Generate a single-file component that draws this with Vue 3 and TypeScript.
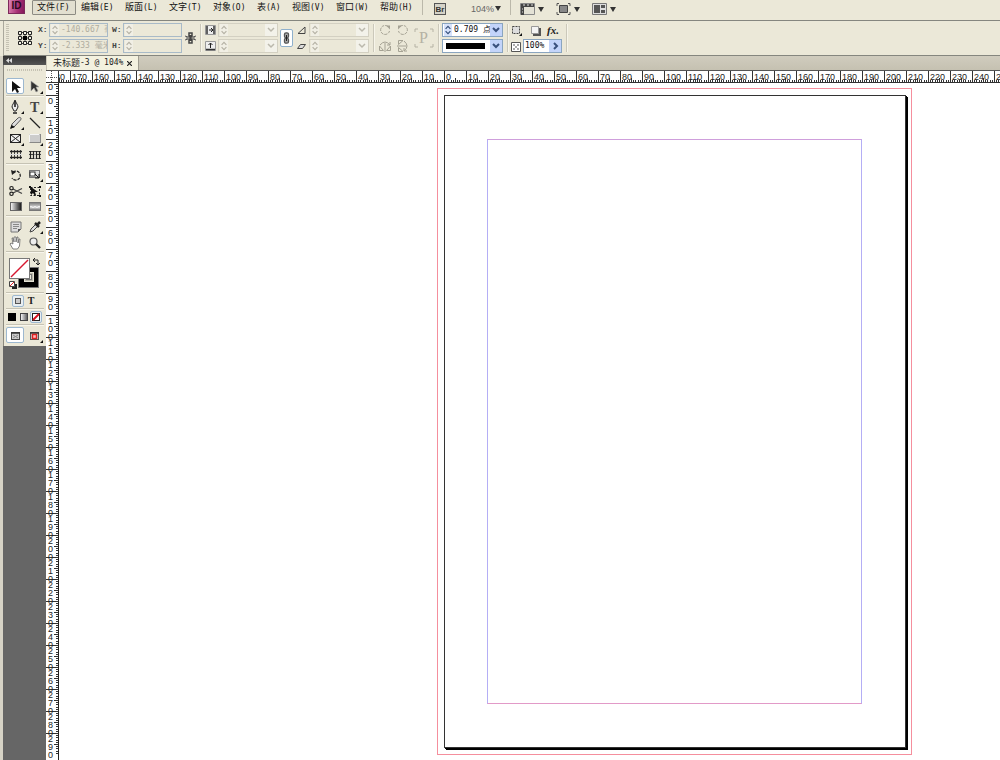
<script setup lang="ts">
import { ref } from 'vue'

interface MenuItem { label: string; key: string; short?: boolean }
interface Tick { pos: number; len: number }

const menus: MenuItem[] = [
  { label: '文件', key: '(F)' },
  { label: '编辑', key: '(E)' },
  { label: '版面', key: '(L)' },
  { label: '文字', key: '(T)' },
  { label: '对象', key: '(O)' },
  { label: '表', key: '(A)', short: true },
  { label: '视图', key: '(V)' },
  { label: '窗口', key: '(W)' },
  { label: '帮助', key: '(H)' },
]

const posX = ref('-140.667 毫米')
const posY = ref('-2.333 毫米')
const sizeW = ref('')
const sizeH = ref('')
const strokeWeight = ref('0.709 点')
const opacity = ref('100%')
const activeTool = ref('select')

const range = (from: number, to: number): number[] =>
  Array.from({ length: to - from + 1 }, (_, i) => Math.abs(from + i) * 10)
const hMarks = range(-18, 25)
const vMarks = range(-1, 29)
const ticks: Tick[] = Array.from({ length: 9 }, (_, i) => ({
  pos: Math.round((i + 1) * 2.2),
  len: i === 4 ? 4 : 2,
}))

const icons: Record<string, string> = {
  select: '<path d="M5 2v11l3-3 2 4 2-1-2-4h4z" fill="#111"/>',
  direct: '<path d="M5 2v10l3-3 2 4 2-1-2-4h3z" fill="#333" stroke="#aaa" stroke-width=".6"/><path d="M17 12v3h-3z" fill="#111"/>',
  pen: '<path d="M8 1c-1 3-3 5-3 7l2 4h2l2-4c0-2-2-4-3-7z" fill="#eee" stroke="#222"/><path d="M8 2v6M6 14h4" stroke="#222" stroke-width="1.6"/><path d="M17 12v3h-3z" fill="#111"/>',
  type: '<text x="4" y="13" font-family="Liberation Serif, serif" font-size="14" font-weight="bold" fill="#444">T</text><path d="M17 12v3h-3z" fill="#111"/>',
  pencil: '<path d="M4 13l1-4 6-6c2-1.500 4 0 2.500 2L7 12z" fill="#ddd" stroke="#555"/><path d="M3 14l1.500-4L8 12z" fill="#111"/><path d="M17 12v3h-3z" fill="#111"/>',
  line: '<path d="M4 3l10 10" stroke="#222" stroke-width="1.3"/>',
  frame: '<rect x="3.500" y="3.500" width="10" height="8" fill="#eee" stroke="#222"/><path d="M4 4l9 7M13 4l-9 7" stroke="#222"/><path d="M17 12v3h-3z" fill="#111"/>',
  rect: '<rect x="3.500" y="3.500" width="11" height="8" fill="#ccc" stroke="#888"/><path d="M3.500 11.500v-8h10" stroke="#f5f5f5" fill="none"/><path d="M17 12v3h-3z" fill="#111"/>',
  hgrid: '<path d="M4.500 3v9M7.500 3v9M10.500 3v9M13.500 3v9" stroke="#444"/><path d="M3 4.500h12M3 10.500h12" stroke="#222" stroke-width="1.3"/><path d="M3 7.500h12" stroke="#ddd"/>',
  vgrid: '<path d="M3 4.500h12M3 7.500h12M3 11.500h12" stroke="#444"/><path d="M4.500 4v8M7.500 4v8M10.500 4v8M13.500 4v8" stroke="#222" stroke-width="1.2"/><path d="M9 5v7" stroke="#ddd"/>',
  rotate: '<path d="M6 5a4.500 4.500 0 1 1-1 6" fill="none" stroke="#222" stroke-width="1.3" stroke-dasharray="3 1"/><path d="M4 3l1 5 4-3z" fill="#222"/>',
  scale: '<rect x="3.500" y="3.500" width="10" height="7" fill="#ddd" stroke="#777"/><rect x="4" y="5" width="5" height="4" fill="#fff" stroke="#333"/><path d="M9 7l4 4M13 7v4H9" stroke="#111" fill="none"/><path d="M17 12v3h-3z" fill="#111"/>',
  scissors: '<path d="M6 6l9 4.500M6 10l9-4.500" stroke="#444" stroke-width="1.3"/><circle cx="4.500" cy="5.200" r="1.700" fill="none" stroke="#222" stroke-width="1.2"/><circle cx="4.500" cy="10.800" r="1.700" fill="none" stroke="#222" stroke-width="1.2"/>',
  transform: '<rect x="4.500" y="4.500" width="9" height="8" fill="none" stroke="#222" stroke-dasharray="2 1.500"/><path d="M3 3h2v2H3zM13 3h2v2h-2zM13 12h2v2h-2z" fill="#111"/><path d="M5 4v8l2-2 2 3 1-1-1-3h3z" fill="#111"/>',
  gradient: '<defs><linearGradient id="g1"><stop stop-color="#fff"/><stop offset="1" stop-color="#111"/></linearGradient></defs><rect x="3.500" y="3.500" width="11" height="8" fill="url(#g1)" stroke="#666"/>',
  feather: '<defs><linearGradient id="g2" x2="0" y2="1"><stop stop-color="#777"/><stop offset=".6" stop-color="#ddd"/><stop offset="1" stop-color="#666"/></linearGradient></defs><rect x="3.500" y="3.500" width="11" height="8" fill="url(#g2)" stroke="#777"/><path d="M4 7.500h2v1h2v-1h2v1h2v-1h2" stroke="#eee" fill="none"/>',
  note: '<path d="M4 3h10v7l-3 3H4z" fill="#ddd" stroke="#777"/><path d="M6 5.500h6M6 7.500h6M6 9.500h4" stroke="#888"/><path d="M14 10h-3v3z" fill="#555"/>',
  dropper: '<path d="M4 13l1-3 5-5 2 2-5 5z" fill="#ddd" stroke="#444"/><path d="M9 4l4 4M11 6l3-3" stroke="#222" stroke-width="2.500"/><path d="M17 12v3h-3z" fill="#111"/>',
  hand: '<path d="M6 14L3 9l1-1 2 1-1-6h1l1 4V2h2v5l1-5h1v6l1-4h1l-.5 7-2 3z" fill="#fff" stroke="#666" stroke-width=".8"/>',
  magnify: '<circle cx="7.500" cy="6.500" r="3.500" fill="#eee" stroke="#555" stroke-width="1.200"/><path d="M10 9l4 4" stroke="#222" stroke-width="2.300"/>',
}

const toolGroups: { id: string; label: string }[][] = [
  [{ id: 'select', label: '选择工具' }, { id: 'direct', label: '直接选择工具' }],
  [
    { id: 'pen', label: '钢笔工具' }, { id: 'type', label: '文字工具' },
    { id: 'pencil', label: '铅笔工具' }, { id: 'line', label: '直线工具' },
    { id: 'frame', label: '矩形框架工具' }, { id: 'rect', label: '矩形工具' },
    { id: 'hgrid', label: '水平网格工具' }, { id: 'vgrid', label: '垂直网格工具' },
  ],
  [
    { id: 'rotate', label: '旋转工具' }, { id: 'scale', label: '缩放工具' },
    { id: 'scissors', label: '剪刀工具' }, { id: 'transform', label: '自由变换工具' },
    { id: 'gradient', label: '渐变色板工具' }, { id: 'feather', label: '渐变羽化工具' },
  ],
  [
    { id: 'note', label: '附注工具' }, { id: 'dropper', label: '吸管工具' },
    { id: 'hand', label: '抓手工具' }, { id: 'magnify', label: '缩放显示工具' },
  ],
]
</script>

<template>
  <div class="app">
    <header class="menubar">
      <div class="logo">ID</div>
      <nav class="menus">
        <button v-for="(m, i) in menus" :key="m.label" class="menu" :class="{ short: m.short, open: i === 0 }" type="button">
          {{ m.label }}<span class="mono">{{ m.key }}</span>
        </button>
      </nav>
      <i class="msep"></i>
      <button class="bridge" type="button">Br</button>
      <select class="zoom" aria-label="缩放级别"><option>104%</option></select>
      <svg class="tri" viewBox="0 0 6 5"><path d="M0 0h6L3 5z" /></svg>
      <i class="msep second"></i>
      <button class="view" type="button" aria-label="视图选项">
        <svg width="15" height="12" viewBox="0 0 15 12"><path d="M.5 .5h14v11H.5z" fill="#e4e2d6" stroke="#888" /><path d="M1 1h13v3H4v8H1z" fill="#444" /><path d="M3 2h2M7 2h2M11 2h2M2 6h1M2 9h1" stroke="#ddd" /></svg>
        <svg class="tri" viewBox="0 0 6 5"><path d="M0 0h6L3 5z" /></svg>
      </button>
      <button class="view" type="button" aria-label="屏幕模式">
        <svg width="15" height="12" viewBox="0 0 15 12"><path d="M3.500 2.500h8v7h-8z" fill="#888" stroke="#444" /><path d="M1 3V.5h2M12 .5h2V3M14 9v2.500h-2M3 11.500H1V9" fill="none" stroke="#555" /></svg>
        <svg class="tri" viewBox="0 0 6 5"><path d="M0 0h6L3 5z" /></svg>
      </button>
      <button class="view" type="button" aria-label="排列文档">
        <svg width="15" height="12" viewBox="0 0 15 12"><path d="M.5 .5h14v11H.5z" fill="#ddd" stroke="#777" /><path d="M2 2h6v8H2zM9 2h4v3H9zM9 7h4v3H9z" fill="#555" /></svg>
        <svg class="tri" viewBox="0 0 6 5"><path d="M0 0h6L3 5z" /></svg>
      </button>
    </header>

    <section class="control">
      <i class="grip"></i>
      <svg class="refpoint" width="16" height="16" viewBox="0 0 16 16">
        <path d="M3 2.500h10v11H3zM8 2v12M3 8h10" fill="none" stroke="#444" />
        <g fill="#f2f0e4" stroke="#222"><path d="M1.500 1.500h3v3h-3zM6.500 1.500h3v3h-3zM11.500 1.500h3v3h-3zM1.500 6.500h3v3h-3zM11.500 6.500h3v3h-3zM1.500 11.500h3v3h-3zM6.500 11.500h3v3h-3zM11.500 11.500h3v3h-3z" /></g>
        <path d="M6 6h4v4H6z" fill="#000" />
      </svg>
      <div class="pair first">
        <label for="px">X:</label>
        <div class="field"><svg class="spin" viewBox="0 0 6 10"><path d="M1 4l2-2 2 2M1 6l2 2 2-2" /></svg><input id="px" v-model="posX"></div>
        <label for="py">Y:</label>
        <div class="field"><svg class="spin" viewBox="0 0 6 10"><path d="M1 4l2-2 2 2M1 6l2 2 2-2" /></svg><input id="py" v-model="posY"></div>
      </div>
      <div class="pair second">
        <label for="sw">W:</label>
        <div class="field"><svg class="spin" viewBox="0 0 6 10"><path d="M1 4l2-2 2 2M1 6l2 2 2-2" /></svg><input id="sw" v-model="sizeW"></div>
        <label for="sh">H:</label>
        <div class="field"><svg class="spin" viewBox="0 0 6 10"><path d="M1 4l2-2 2 2M1 6l2 2 2-2" /></svg><input id="sh" v-model="sizeH"></div>
      </div>
      <button class="chain" type="button" aria-label="约束宽高比例">
        <svg width="11" height="12" viewBox="0 0 11 12"><path d="M4 1h3v4H4zM4 7h3v4H4zM5.500 3v6" fill="none" stroke="#444" stroke-width="1.500" /><path d="M0 4l3 1M0 8l3-1M11 4L8 5M11 8L8 7M1 6h2M8 6h2" stroke="#555" /></svg>
      </button>
      <i class="csep"></i>
      <div class="pair icons third">
        <svg width="11" height="10" viewBox="0 0 11 10"><path d="M.5 .5h10v9H.5z" fill="#eee" stroke="#999" /><path d="M2 1v8M9 1v8" stroke="#333" stroke-width="1.500" /><path d="M4 5h4M6 3l2 2-2 2" fill="none" stroke="#222" /></svg>
        <div class="field off"><svg class="spin" viewBox="0 0 6 10"><path d="M1 4l2-2 2 2M1 6l2 2 2-2" /></svg><input aria-label="X 缩放百分比" disabled><button class="drop" type="button" disabled aria-label="X 缩放选项"><svg viewBox="0 0 10 10"><path d="M2 3l3 3 3-3" /></svg></button></div>
        <svg width="11" height="10" viewBox="0 0 11 10"><path d="M.5 .5h10v9H.5z" fill="#eee" stroke="#999" /><path d="M1 8.500h9" stroke="#333" stroke-width="1.500" /><path d="M5.500 7V2M3.500 4l2-2 2 2" fill="none" stroke="#222" /></svg>
        <div class="field off"><svg class="spin" viewBox="0 0 6 10"><path d="M1 4l2-2 2 2M1 6l2 2 2-2" /></svg><input aria-label="Y 缩放百分比" disabled><button class="drop" type="button" disabled aria-label="Y 缩放选项"><svg viewBox="0 0 10 10"><path d="M2 3l3 3 3-3" /></svg></button></div>
      </div>
      <button class="linked" type="button" aria-label="约束缩放比例">
        <svg width="7" height="12" viewBox="0 0 7 12"><rect x="1.500" y=".8" width="4" height="5" rx="1.500" fill="#aaa" stroke="#555" stroke-width="1.300" /><rect x="1.500" y="6.200" width="4" height="5" rx="1.500" fill="#aaa" stroke="#555" stroke-width="1.300" /><path d="M3.500 3v6" stroke="#222" /></svg>
      </button>
      <div class="pair icons fourth">
        <svg width="11" height="10" viewBox="0 0 11 10"><path d="M2 8.500h7V2z" fill="none" stroke="#444" /></svg>
        <div class="field off"><svg class="spin" viewBox="0 0 6 10"><path d="M1 4l2-2 2 2M1 6l2 2 2-2" /></svg><input aria-label="旋转角度" disabled><button class="drop" type="button" disabled aria-label="旋转选项"><svg viewBox="0 0 10 10"><path d="M2 3l3 3 3-3" /></svg></button></div>
        <svg width="11" height="10" viewBox="0 0 11 10"><path d="M1.500 7.500l3-4h5l-3 4z" fill="#ddd" stroke="#444" /></svg>
        <div class="field off"><svg class="spin" viewBox="0 0 6 10"><path d="M1 4l2-2 2 2M1 6l2 2 2-2" /></svg><input aria-label="X 切变角度" disabled><button class="drop" type="button" disabled aria-label="切变选项"><svg viewBox="0 0 10 10"><path d="M2 3l3 3 3-3" /></svg></button></div>
      </div>
      <i class="csep"></i>
      <div class="quad">
        <svg viewBox="0 0 12 12"><path d="M9 2.500A4.500 4.500 0 1 0 10.500 7" stroke-dasharray="3 1" /><path d="M7 1.500h4v4z" class="solid" /></svg>
        <svg viewBox="0 0 12 12"><path d="M3 2.500A4.500 4.500 0 1 1 1.500 7" stroke-dasharray="3 1" /><path d="M5 1.500H1v4z" class="solid" /></svg>
        <svg viewBox="0 0 12 12"><path d="M.5 10.500V6l4 4.500zM11.500 10.500V6l-4 4.500zM6 3v9M1 5q5-6 10 0M8 5h3V2" /></svg>
        <svg viewBox="0 0 12 12"><path d="M1.500 .5H6l-4.500 4zM1.500 11.500H6l-4.500-4zM0 6h9M7 1q6 5 0 10M7 8v3h3" /></svg>
      </div>
      <svg class="pbox" width="20" height="20" viewBox="0 0 20 20">
        <path d="M1 4V1h3M16 1h3v3M19 16v3h-3M4 19H1v-3" fill="none" stroke="#b5b2a4" />
        <text x="5" y="15" font-family="Liberation Serif, serif" font-size="16" fill="#b5b2a4">P</text>
      </svg>
      <i class="csep"></i>
      <div class="stroke">
        <div class="field live"><svg class="spin" viewBox="0 0 6 10"><path d="M1 4l2-2 2 2M1 6l2 2 2-2" /></svg><input v-model="strokeWeight" aria-label="描边粗细"><button class="drop" type="button" aria-label="描边粗细选项"><svg viewBox="0 0 10 10"><path d="M2 3l3 3 3-3" /></svg></button></div>
        <div class="field live"><i class="solidline"></i><button class="drop" type="button" aria-label="描边类型"><svg viewBox="0 0 10 10"><path d="M2 3l3 3 3-3" /></svg></button></div>
      </div>
      <i class="csep"></i>
      <div class="effects">
        <div class="row top">
          <svg width="11" height="11" viewBox="0 0 11 11"><rect x="1.500" y="1.500" width="7" height="7" fill="#ddd" stroke="#444" stroke-dasharray="2 1" /><path d="M11 8v3H8z" fill="#111" /></svg>
          <svg width="11" height="11" viewBox="0 0 11 11"><path d="M3 3h8v8H3z" fill="#555" /><path d="M1.500 1.500h7v7h-7z" fill="#f4f4f4" stroke="#999" /></svg>
          <button class="fx" type="button">fx.</button>
        </div>
        <div class="row">
          <svg width="10" height="11" viewBox="0 0 10 11"><path d="M.5 1.500h9v9h-9z" fill="#fff" stroke="#555" /><path d="M2 3h2v2H2zM6 3h2v2H6zM4 5h2v2H4zM2 7h2v2H2zM6 7h2v2H6z" fill="#aaa" /></svg>
          <div class="field live"><input v-model="opacity" aria-label="不透明度"><button class="drop" type="button" aria-label="不透明度滑块"><svg viewBox="0 0 10 10"><path d="M4 2l3 3-3 3" /></svg></button></div>
        </div>
      </div>
      <i class="csep"></i>
    </section>

    <div class="body">
      <aside class="side">
        <button class="collapse" type="button" aria-label="折叠面板">
          <svg width="6" height="5" viewBox="0 0 6 5"><path d="M3 0v5L0 2.500zM6 0v5L3 2.500z" fill="#ddd" /></svg>
        </button>
        <div class="tools">
          <div class="handle"></div>
          <template v-for="(g, gi) in toolGroups" :key="gi">
            <div class="group">
              <button v-for="t in g" :key="t.id" type="button" class="tool" :class="{ on: activeTool === t.id }" :aria-label="t.label" @click="activeTool = t.id">
                <svg width="18" height="16" viewBox="0 0 18 16" fill="none" v-html="icons[t.id]"></svg>
              </button>
            </div>
            <hr>
          </template>
          <svg class="swatch" width="36" height="37" viewBox="0 0 36 37">
            <rect x="12.500" y="13.500" width="20" height="20" fill="#000" stroke="#777" />
            <rect x="18.500" y="18.500" width="9" height="9" fill="#b9b7aa" stroke="#e4e2d4" />
            <rect x="20.500" y="20.500" width="5" height="5" fill="#ece9d9" stroke="#777" />
            <rect x="3.500" y="4.500" width="20" height="20" fill="#fff" stroke="#777" />
            <path d="M5 23L22 6" stroke="#d81830" stroke-width="1.500" />
            <path d="M27 6h5v5M29 4l-2 2 2 2M30 9l2 2 2-2" fill="none" stroke="#222" />
            <path d="M6 30h5v5H6z" fill="#222" /><path d="M3.500 27.500h5v5h-5z" fill="#fff" stroke="#444" /><path d="M4 32l4-4" stroke="#d22" />
          </svg>
          <hr>
          <div class="mini two">
            <button type="button" class="on" aria-label="格式针对容器"><svg viewBox="0 0 10 10"><rect x="2.500" y="2.500" width="5" height="5" fill="#ccc" stroke="#555" /></svg></button>
            <button type="button" class="tee" aria-label="格式针对文本">T</button>
          </div>
          <hr>
          <div class="mini three">
            <button type="button" aria-label="应用颜色"><svg viewBox="0 0 10 10"><path d="M1 1h8v8H1z" fill="#000" /></svg></button>
            <button type="button" aria-label="应用渐变"><svg viewBox="0 0 10 10"><defs><linearGradient id="g3"><stop stop-color="#fff" /><stop offset="1" stop-color="#555" /></linearGradient></defs><rect x="1.500" y="1.500" width="7" height="7" fill="url(#g3)" stroke="#444" /></svg></button>
            <button type="button" class="on" aria-label="应用无"><svg viewBox="0 0 10 10"><rect x="1.500" y="1.500" width="7" height="7" fill="#fff" stroke="#222" /><path d="M2 8l6-6" stroke="#d81020" stroke-width="2" /></svg></button>
          </div>
          <hr>
          <div class="group">
            <button type="button" class="tool on" aria-label="正常视图"><svg width="18" height="16" viewBox="0 0 18 16"><rect x="4.500" y="4.500" width="8" height="7" fill="#ccc" stroke="#444" /><path d="M4 5h9" stroke="#333" stroke-width="1.500" /><path d="M6 7l5 3M11 7l-5 3" stroke="#888" /></svg></button>
            <button type="button" class="tool" aria-label="预览"><svg width="18" height="16" viewBox="0 0 18 16"><rect x="4.500" y="4.500" width="8" height="7" fill="#ccc" stroke="#555" /><path d="M4 5h9" stroke="#333" stroke-width="1.500" /><rect x="6.500" y="6.500" width="4" height="4" fill="#fbb" stroke="#d22" stroke-width="1.400" /><path d="M17 12v3h-3z" fill="#111" /></svg></button>
          </div>
        </div>
      </aside>

      <main class="doc">
        <div class="tabs">
          <div class="tab">未标题<span class="mono">-3 @ 104%</span><button type="button" aria-label="关闭"><svg width="5" height="5" viewBox="0 0 5 5"><path d="M0 0l5 5M5 0L0 5" stroke="#222" stroke-width="1.200" /></svg></button></div>
        </div>
        <div class="hrow">
          <div class="corner"><svg width="13" height="11" viewBox="0 0 13 11"><path d="M0 6.500h13M5.500 0v11" stroke="#555" stroke-dasharray="1 1" /></svg></div>
          <div class="hruler">
            <div v-for="(n, i) in hMarks" :key="i" class="hseg">
              <span>{{ n }}</span>
              <svg width="22" height="11" viewBox="0 0 22 11"><path v-for="t in ticks" :key="t.pos" :d="`M${t.pos}.5 11v-${t.len}`" stroke="#333" /></svg>
            </div>
          </div>
        </div>
        <div class="work">
          <div class="vruler">
            <div v-for="(n, i) in vMarks" :key="i" class="vseg">
              <div class="digits"><span v-for="(d, k) in String(n)" :key="k">{{ d }}</span></div>
              <svg width="12" height="22" viewBox="0 0 12 22"><path v-for="t in ticks" :key="t.pos" :d="`M12 ${t.pos}.5h-${t.len}`" stroke="#333" /></svg>
            </div>
          </div>
          <div class="canvas">
            <div class="bleed"><div class="page"><div class="margins"></div></div></div>
          </div>
        </div>
      </main>
    </div>
  </div>
</template>

<style>
body { margin: 0; overflow: hidden; }
</style>

<style scoped>
* { box-sizing: border-box; }
.app { height: 100vh; display: flex; flex-direction: column; overflow: hidden; background: #ebe8d8; color: #222; font: 9px/12px "Liberation Sans", "Noto Sans CJK SC", sans-serif; }
button, input, select { font: inherit; color: inherit; margin: 0; padding: 0; border: 0; background: none; border-radius: 0; min-width: 0; }
svg { display: block; flex: none; }
.mono { font-family: "DejaVu Sans Mono", monospace; font-size: 8px; }

.menubar { flex: none; height: 21px; display: flex; align-items: flex-start; padding-left: 8px; border-bottom: 1px solid #85867f; }
.logo { width: 17px; height: 14px; background: linear-gradient(100deg, #de84b4, #a63074 60%, #85185a); border: 1px solid #7c2a5a; border-top: 0; color: #2b0a1c; font-weight: bold; font-size: 10px; line-height: 12px; text-align: center; }
.menus { display: flex; margin-left: 7px; }
.menu { flex: none; width: 44px; height: 15px; padding-left: 4px; border: 1px solid transparent; text-align: left; line-height: 12px; white-space: nowrap; color: #111; }
.menu.short { width: 35px; }
.menu.open { border-color: #8c8b83; background: #e2dfd0; border-radius: 1px; }
.msep { flex: none; width: 1px; height: 15px; background: #bbb8aa; margin-left: 3px; margin-right: 11px; }
.msep.second { margin-left: 9px; margin-right: 9px; }
.bridge { width: 12px; height: 12px; margin-top: 3px; border: 1px solid #555; background: #d5d3c8; font-size: 8px; line-height: 9px; font-weight: bold; color: #333; }
.zoom { appearance: none; width: 24px; height: 12px; margin: 3px 0 0 25px; font-family: "Liberation Sans", sans-serif; font-size: 9px; color: #666; }
.tri { width: 6px; height: 5px; fill: #333; }
.menubar > .tri { margin-top: 6px; }
.view { display: flex; align-items: center; gap: 3px; margin-top: 3px; margin-right: 12px; }

.control { flex: none; height: 35px; display: flex; align-items: center; margin-left: 3px; border-left: 1px solid #aaa89c; border-bottom: 1px solid #85867f; }
.control > * { flex: none; }
.grip { width: 3px; height: 28px; margin-left: 2px; background: repeating-linear-gradient(#c5c2b3 0 1px, transparent 1px 2px); }
.refpoint { margin-left: 8px; }
.pair { display: grid; grid-template-columns: 11px 59px; gap: 2px 0; align-items: center; }
.pair.icons { grid-template-columns: 13px 60px; }
.pair label { font: bold 8px/14px "Liberation Mono", monospace; color: #444; }
.first { margin-left: 5px; }
.second { margin-left: 4px; }
.third { margin-left: 3px; }
.fourth { margin-left: 3px; }
.field { height: 14px; display: flex; align-items: center; border: 1px solid #a8bac8; overflow: hidden; color: #b0ad9f; }
.field input { flex: 1; width: 0; height: 12px; font: 8px/12px "DejaVu Sans Mono", "Noto Sans CJK SC", monospace; }
.field.off { border-color: #d3d0c2; }
.spin { width: 8px; height: 12px; margin: 0 2px 0 1px; fill: none; stroke: #b5b2a5; background: #f1efe5; }
.drop { flex: none; width: 12px; height: 12px; display: grid; place-items: center; background: #f3f2ea; }
.drop svg { width: 10px; height: 10px; fill: none; stroke: #bbb8ac; stroke-width: 1.5; }
.live { background: #fff; border-color: #8aa5c0; color: #111; }
.live .spin { background: #d6e2fb; stroke: #35507a; }
.live .drop { background: #c3d4fa; }
.live .drop svg { stroke: #39507c; stroke-width: 2; }
.chain { margin-left: 3px; width: 11px; }
.csep { width: 2px; height: 28px; margin: 0 0 0 4px; background: #cbc8ba; border-right: 1px solid #f7f5ea; }
.linked { width: 13px; height: 18px; margin-left: 2px; border: 1px solid #8fb0cc; border-radius: 2px; background: #fff; display: grid; place-items: center; }
.quad { display: grid; grid-template-columns: 12px 12px; gap: 4px 6px; margin-left: 4px; }
.quad svg { width: 12px; height: 12px; fill: none; stroke: #a5a294; }
.quad .solid { fill: #a5a294; stroke: none; }
.pbox { margin-left: 5px; }
.stroke { width: 61px; display: grid; gap: 2px; margin-left: 2px; }
.solidline { flex: 1; height: 6px; margin: 0 5px 0 3px; background: #000; }
.effects { width: 51px; display: grid; gap: 2px; margin-left: 2px; }
.effects .row { display: flex; align-items: center; gap: 2px; height: 14px; }
.effects .top { gap: 8px; }
.effects .field { flex: 1; }
.effects .field input { padding-left: 1px; }
.fx { font: italic bold 11px/12px "Liberation Serif", serif; margin-left: -2px; }

.body { flex: 1; min-height: 0; display: flex; }
.side { flex: none; width: 46px; display: flex; flex-direction: column; border-left: 3px solid #d6d3c6; background: #666; }
.collapse { flex: none; height: 9px; padding: 2px 3px; background: linear-gradient(#333, #555); display: flex; }
.tools { background: #ebe8d8; border-left: 1px solid #8d8b80; padding: 0 2px 3px; }
.handle { height: 13px; padding: 4px 1px; }
.handle::before { content: ""; display: block; height: 2px; background: repeating-linear-gradient(90deg, #c5c2b3 0 1px, transparent 1px 2px); }
.group { display: grid; grid-template-columns: 18px 18px; gap: 0 1px; }
.tool { height: 16px; border: 1px solid transparent; border-radius: 2px; display: grid; place-items: center; }
.on { border-color: #9db8d0; background: #fff; }
.tools hr { height: 2px; margin: 1px 0; border: 0; border-top: 1px solid #c6c3b4; background: #f8f6ec; }
.mini { height: 12px; display: flex; align-items: center; }
.mini button { width: 12px; height: 12px; display: grid; place-items: center; border: 1px solid transparent; border-radius: 2px; }
.mini button.on { border-color: #9db8d0; background: #e9eff2; }
.mini svg { width: 10px; height: 10px; }
.two { padding-left: 6px; gap: 1px; }
.mini .tee { font: bold 10px/10px "Liberation Serif", serif; }

.doc { flex: 1; min-width: 0; display: flex; flex-direction: column; background: #fff; }
.tabs { flex: none; height: 14px; display: flex; background: linear-gradient(#d0ccbe, #c5c1b1); padding-left: 1px; }
.tab { display: flex; align-items: center; padding: 0 5px 0 6px; background: #f3f1df; border-right: 1px solid #a09d90; white-space: pre; }
.tab button { margin-left: 3px; padding: 1px; }
.hrow { flex: none; height: 13px; display: flex; border-top: 1px solid #555; border-bottom: 1px solid #333; }
.corner { flex: none; width: 13px; border-right: 1px solid #333; overflow: hidden; }
.hruler { flex: 1; min-width: 0; display: flex; overflow: hidden; }
.hseg { flex: none; width: 22px; height: 11px; border-left: 1px solid #333; display: grid; }
.hseg:first-child { margin-left: -11px; }
.hseg > * { grid-area: 1 / 1; }
.hseg svg { margin-left: -1px; }
.hseg span { padding-left: 1px; line-height: 12px; color: #222; }
.work { flex: 1; min-height: 0; display: flex; }
.vruler { flex: none; width: 13px; border-right: 1px solid #222; overflow: hidden; }
.vseg { height: 22px; border-top: 1px solid #333; display: grid; grid-template: 21px / 12px; }
.vseg:first-child { margin-top: -10px; }
.vseg > * { grid-area: 1 / 1; }
.vseg svg { margin-top: -1px; }
.digits { display: flex; flex-direction: column; padding: 1px 0 0 2px; font-size: 9px; line-height: 8px; color: #222; }
.canvas { flex: 1; min-width: 0; overflow: hidden; padding: 5px 0 0 378px; }
.bleed { width: 475px; height: 667px; padding: 6px 4px 5px 6px; border: 1px solid #f58f9d; }
.page { width: 462px; height: 653px; padding: 43px 43px 43px 42px; border: 1px solid #333; box-shadow: 1px 1px #000, 2px 2px #000; background: #fff; }
.margins { height: 565px; border: 1px solid #b4aef5; border-top-color: #cf9fdc; border-bottom-color: #e29ac8; }
</style>
